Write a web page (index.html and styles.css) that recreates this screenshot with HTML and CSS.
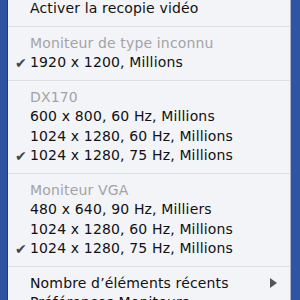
FILE: index.html
```html
<!DOCTYPE html>
<html lang="fr">
<head>
    <meta charset="UTF-8">
    <title>Moniteurs</title>
    <link rel="stylesheet" href="styles.css">
</head>
<body>
    <div class="screen">
        <div class="desk left"></div>

        <!-- Displays menu -->
        <ul class="menu">
            <li class="item">Activer la recopie vidéo</li>
            <li class="sep"></li>

            <li class="item head">Moniteur de type inconnu</li>
            <li class="item checked">1920 x 1200, Millions</li>
            <li class="sep"></li>

            <li class="item head">DX170</li>
            <li class="item">600 x 800, 60 Hz, Millions</li>
            <li class="item">1024 x 1280, 60 Hz, Millions</li>
            <li class="item checked">1024 x 1280, 75 Hz, Millions</li>
            <li class="sep"></li>

            <li class="item head">Moniteur VGA</li>
            <li class="item">480 x 640, 90 Hz, Milliers</li>
            <li class="item">1024 x 1280, 60 Hz, Millions</li>
            <li class="item checked">1024 x 1280, 75 Hz, Millions</li>
            <li class="sep"></li>

            <li class="item sub">Nombre d’éléments récents</li>
            <li class="item">Préférences Moniteurs…</li>
        </ul>

        <div class="desk right"></div>
    </div>
</body>
</html>
```

FILE: styles.css
```css
body {
    margin: 0;
    font-family: "DejaVu Sans", "Lucida Grande", sans-serif;
    background-color: #2c54a0;
}

.screen {
    display: flex;
    height: 300px;
    overflow: hidden;
}

.desk {
    background-color: #2d55a2;
}

.desk.left {
    width: 7px;
    border-right: 1px solid #1f3f7e;
}

.desk.right {
    width: 9px;
    border-left: 1px solid #a9b3c8;
}

/* Menu panel */
.menu {
    flex: 1;
    list-style: none;
    margin: -1px 0 0 0;
    padding: 0;
    background-color: #f3f4f8;
}

.item {
    position: relative;
    height: 19.5px;
    line-height: 19.5px;
    padding-left: 22px;
    font-size: 14px;
    letter-spacing: 0.15px;
    color: #111;
    white-space: nowrap;
}

.item.head {
    color: #a3a3a6;
}

.item.checked::before {
    content: "\2714";
    position: absolute;
    left: 7px;
    top: 1px;
    font-size: 14px;
    color: #444;
}

.item.sub::after {
    content: "";
    position: absolute;
    right: 13px;
    top: 4px;
    border-top: 5px solid transparent;
    border-bottom: 5px solid transparent;
    border-left: 7px solid #555;
}

.sep {
    height: 15px;
    display: flex;
    align-items: center;
}

.sep::after {
    content: "";
    flex: 1;
    height: 1px;
    background-color: #dedfe3;
}
```
